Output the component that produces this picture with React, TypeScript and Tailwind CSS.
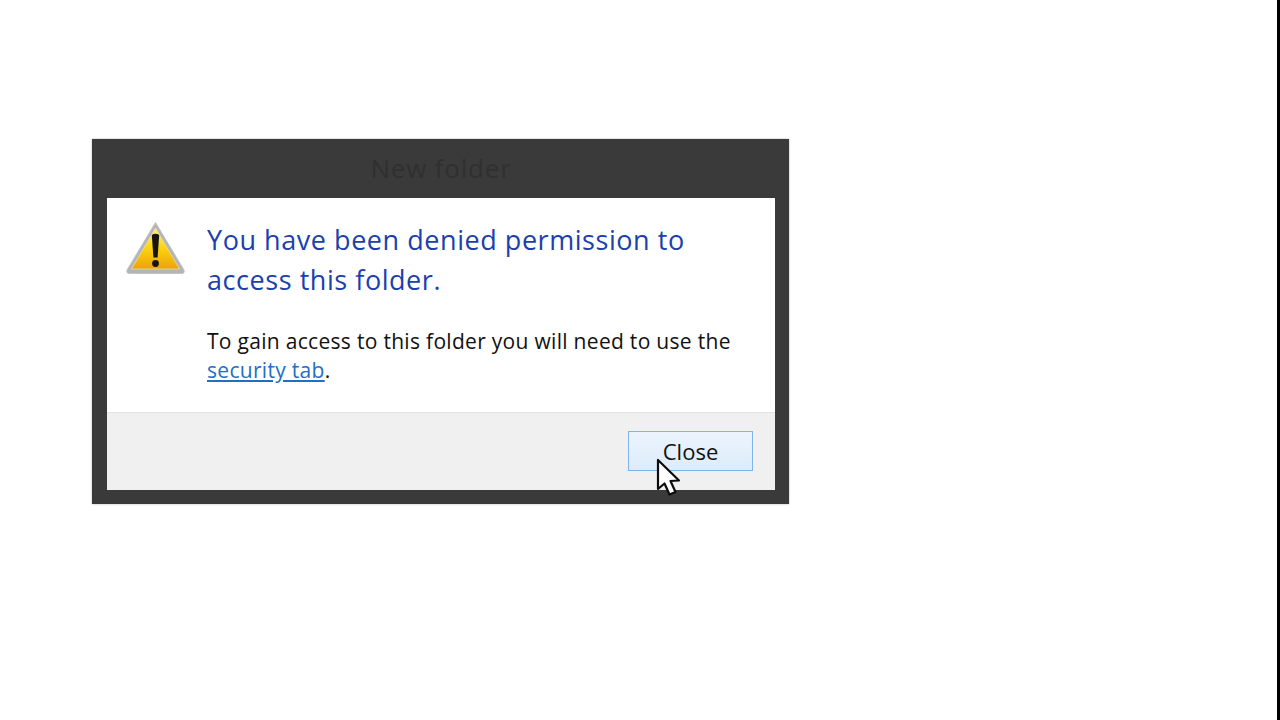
import React from 'react';

const WarningIcon = () => (
  <svg width="60" height="54" viewBox="0 0 60 54" className="mt-[1px] shrink-0">
    <defs>
      <linearGradient id="amber" x1="0" y1="0" x2="0" y2="1">
        <stop offset="0" stopColor="#fff07a" />
        <stop offset="0.5" stopColor="#fcd20e" />
        <stop offset="1" stopColor="#eda208" />
      </linearGradient>
    </defs>
    <path d="M29.5 1.5 L58 49 Q59 52.5 55.5 52.5 L3.5 52.5 Q0 52.5 1 49 Z" fill="#b4b4b4" stroke="#c4c4c4" strokeWidth="1" strokeLinejoin="round" />
    <path d="M29.5 7 L53.5 48 L5.5 48 Z" fill="url(#amber)" stroke="#e8dfa8" strokeWidth="0.8" />
    <path d="M25.8 14 Q29.5 11.5 33.2 14 L31.6 36.5 L27.4 36.5 Z" fill="#17150f" />
    <circle cx="29.5" cy="42.5" r="3.4" fill="#17150f" />
  </svg>
);

const Cursor = () => (
  <svg width="28" height="40" viewBox="0 0 28 40" className="absolute left-[654px] top-[458px]">
    <path d="M4 2 L4 31 L10.5 25.5 L15.5 36.5 L21.5 34 L16.5 23 L25 22.5 Z" fill="#ffffff" stroke="#0c0c0c" strokeWidth="2.2" strokeLinejoin="round" />
  </svg>
);

export default function App() {
  return (
    <div className="relative flex h-[720px] w-[1280px] overflow-hidden bg-white font-['Open_Sans','Noto_Sans',sans-serif]">
      <div className="flex-1 pl-[92px] pt-[139px]">
        <div className="w-[697px] bg-[#3a3a3a] pb-[14px] pl-[15px] pr-[14px] shadow-[0_0_2px_rgba(0,0,0,0.3)]">
          <div className="flex h-[59px] items-center justify-center text-[26px] tracking-[0.8px] text-[#303030]">New folder</div>
          <div className="flex h-[214px] gap-[21px] bg-white pl-[19px] pt-[22px]">
            <WarningIcon />
            <div>
              <h1 className="text-[27px] leading-[40px] tracking-[0.55px] text-[#1c3fae]">
                You have been denied permission to
                <br />
                access this folder.
              </h1>
              <p className="mt-[27px] text-[21px] leading-[29px] tracking-[0.3px] text-[#111111]">
                To gain access to this folder you will need to use the
                <br />
                <a className="text-[#1f6fc4] underline">security tab</a>.
              </p>
            </div>
          </div>
          <div className="flex h-[78px] justify-end border-t border-[#e4e4e4] bg-[#f0f0f0] pr-[22px] pt-[18px]">
            <button className="h-[40px] w-[125px] border border-[#7eb4ea] bg-gradient-to-b from-[#ecf4fc] to-[#dcecfc] text-[22px] text-[#111111]">
              Close
            </button>
          </div>
        </div>
      </div>
      <div className="w-[3px] bg-black" />
      <Cursor />
    </div>
  );
}
